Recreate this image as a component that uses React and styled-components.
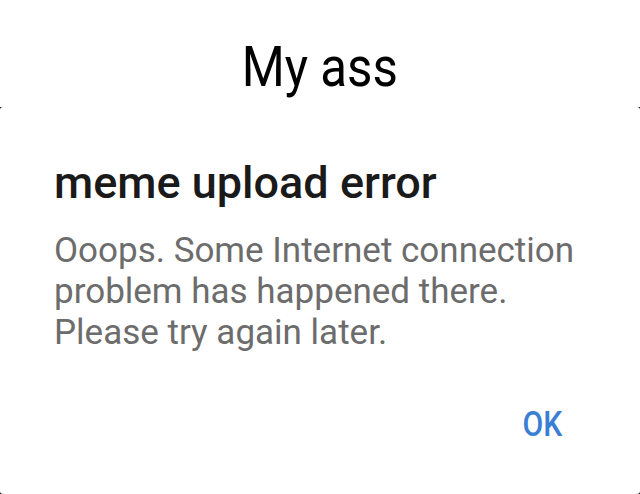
import React from "react";
import styled, { createGlobalStyle } from "styled-components";

const Global = createGlobalStyle`
  html, body { margin: 0; padding: 0; background: #ffffff; }
  body { width: 640px; height: 494px; overflow: hidden; font-family: Roboto, "Noto Sans", sans-serif; }
`;

const Page = styled.div`
  width: 640px;
  height: 494px;
  display: flex;
  flex-direction: column;
  background: #ffffff;
`;

const Caption = styled.div`
  box-sizing: border-box;
  height: 107px;
  padding-top: 39px;
  text-align: center;
  font-size: 56px;
  line-height: 56px;
  color: #000000;
`;

const CaptionText = styled.span`
  display: inline-block;
  transform: scaleX(0.88);
`;

const Backdrop = styled.div`
  flex: 1;
  background: #1a1a1a;
  display: flex;
`;

const Dialog = styled.div`
  flex: 1;
  background: #ffffff;
  border-radius: 3px;
  padding: 50px 60px 0 54px;
  display: flex;
  flex-direction: column;
`;

const Title = styled.h2`
  margin: 0;
  font-size: 45px;
  font-weight: 500;
  color: #1a1a1a;
  line-height: 52px;
  white-space: nowrap;
`;

const Message = styled.p`
  margin: 21px 0 0;
  font-size: 35px;
  font-weight: 400;
  color: #6c6c6c;
  line-height: 41px;
  white-space: nowrap;
`;

const Actions = styled.div`
  display: flex;
  justify-content: flex-end;
  margin-top: 55px;
  padding-right: 18px;
`;

const OkButton = styled.button`
  border: none;
  background: transparent;
  padding: 0;
  font-family: Roboto, sans-serif;
  font-size: 35px;
  line-height: 34px;
  font-weight: 500;
  color: #3a7fd4;
  transform: scaleX(0.86);
  transform-origin: right center;
`;

export default function App() {
  return (
    <>
      <Global />
      <Page>
        <Caption>
          <CaptionText>My ass</CaptionText>
        </Caption>
        <Backdrop>
          <Dialog>
            <Title>meme upload error</Title>
            <Message>
              Ooops. Some Internet connection
              <br />
              problem has happened there.
              <br />
              Please try again later.
            </Message>
            <Actions>
              <OkButton>OK</OkButton>
            </Actions>
          </Dialog>
        </Backdrop>
      </Page>
    </>
  );
}
